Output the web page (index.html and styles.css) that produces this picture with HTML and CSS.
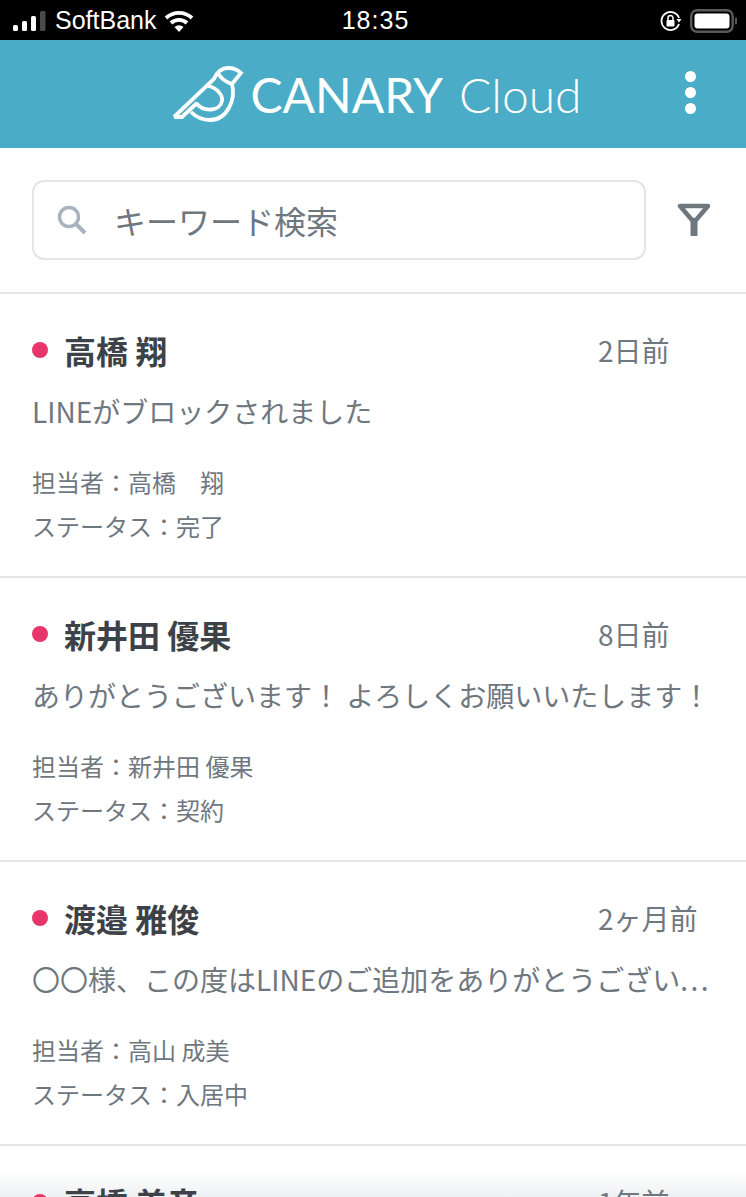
FILE: index.html
```html
<!DOCTYPE html>
<html lang="ja">

<head>
    <meta charset="UTF-8">
    <meta name="viewport" content="width=device-width, initial-scale=1.0">
    <title>CANARY Cloud</title>
    <link rel="stylesheet" href="styles.css">
</head>
<body>
    <div class="statusBar">
        <div class="statusLeft">
            <svg class="signal" width="34" height="20" viewBox="0 0 34 20">
                <rect x="0" y="14" width="5" height="6" rx="1.5" fill="#fff"/>
                <rect x="9" y="10" width="5" height="10" rx="1.5" fill="#fff"/>
                <rect x="18" y="5" width="5" height="15" rx="1.5" fill="#fff"/>
                <rect x="27" y="0" width="5.5" height="20" rx="1.5" fill="#4a4a4a"/>
            </svg>
            <span>SoftBank</span>
            <svg class="wifi" width="30" height="22" viewBox="0 0 30 22">
                <path d="M2 8 A19 19 0 0 1 28 8" fill="none" stroke="#fff" stroke-width="3.8"/>
                <path d="M7 13 A12 12 0 0 1 23 13" fill="none" stroke="#fff" stroke-width="3.8"/>
                <path d="M15 22 L10.5 17 A7 7 0 0 1 19.500 17 Z" fill="#fff"/>
            </svg>
        </div>
        <div class="statusTime">18:35</div>
        <div class="statusRight">
            <svg width="22" height="22" viewBox="0 0 22 22">
                <path d="M19 8 A9 9 0 1 0 19 14" fill="none" stroke="#fff" stroke-width="1.800"/>
                <path d="M16.500 9 L21.500 9 L19 12.500 Z" fill="#fff"/>
                <rect x="6.500" y="10" width="8" height="6.500" rx="1" fill="#fff"/>
                <path d="M8 10 V8 A2.500 2.500 0 0 1 13 8 V10" fill="none" stroke="#fff" stroke-width="1.500"/>
            </svg>
            <svg width="48" height="24" viewBox="0 0 48 24">
                <rect x="1.200" y="1.200" width="41.500" height="21.600" rx="6" fill="none" stroke="#5a5a5a" stroke-width="2.400"/>
                <rect x="4.500" y="4.500" width="35" height="15" rx="3" fill="#fff"/>
                <rect x="45" y="8.500" width="2" height="7" rx="1" fill="#5a5a5a"/>
            </svg>
        </div>
    </div>

    <header class="topBar">
        <div class="logo">
            <svg class="logoBird" width="72" height="56" viewBox="0 0 72 56">
                <path d="M2 51 L42 13 C45 6 50 2 56 2 C62 2 66 4 69 7 L60 18 C64 34 55 54 38 54 C30 54 24 51 19 46" fill="none" stroke="#fff" stroke-width="3.800"/>
                <path d="M2 51 H10 L25 37" fill="none" stroke="#fff" stroke-width="3.800"/>
                <path d="M36 20 C46 22 51 30 50 35 C48 45 32 47 24 37" fill="none" stroke="#fff" stroke-width="3.800"/>
                <path d="M46 7 C49 13 54 16 60 18" fill="none" stroke="#fff" stroke-width="3.800"/>
            </svg>
            <span class="logoName">CANARY</span>
            <span class="logoCloud">Cloud</span>
        </div>
        <div class="menuDots">
            <span></span>
            <span></span>
            <span></span>
        </div>
    </header>

    <section class="searchRow">
        <div class="searchBox">
            <svg width="32" height="32" viewBox="0 0 32 32">
                <circle cx="13" cy="13" r="9.500" fill="none" stroke="#a9b3bf" stroke-width="3.400"/>
                <path d="M20 20 L29 29" stroke="#a9b3bf" stroke-width="4"/>
            </svg>
            <span>キーワード検索</span>
        </div>
        <svg class="filter" width="34" height="34" viewBox="0 0 34 34">
            <path d="M3 3 H31 L19 17 H15 Z" fill="none" stroke="#6e767e" stroke-width="4.500" stroke-linejoin="round"/>
            <path d="M13.500 17 H20.500 V32 Q20.500 33 19.500 33 H14.500 Q13.500 33 13.500 32 Z" fill="#6e767e"/>
        </svg>
    </section>

    <main>
        <article class="item">
            <div class="itemHead">
                <i class="dot"></i>
                <h2>高橋 翔</h2>
                <time>2日前</time>
            </div>
            <p class="message">LINEがブロックされました</p>
            <p class="meta">担当者：高橋　翔</p>
            <p class="meta">ステータス：完了</p>
        </article>
        <article class="item">
            <div class="itemHead">
                <i class="dot"></i>
                <h2>新井田 優果</h2>
                <time>8日前</time>
            </div>
            <p class="message">ありがとうございます！ よろしくお願いいたします！</p>
            <p class="meta">担当者：新井田 優果</p>
            <p class="meta">ステータス：契約</p>
        </article>
        <article class="item">
            <div class="itemHead">
                <i class="dot"></i>
                <h2>渡邉 雅俊</h2>
                <time>2ヶ月前</time>
            </div>
            <p class="message">〇〇様、この度はLINEのご追加をありがとうござい<span class="dots">...</span></p>
            <p class="meta">担当者：高山 成美</p>
            <p class="meta">ステータス：入居中</p>
        </article>
        <article class="item">
            <div class="itemHead">
                <i class="dot"></i>
                <h2>高橋 美音</h2>
                <time>1年前</time>
            </div>
        </article>
    </main>
    <div class="bottomFade"></div>
</body>

</html>
```

FILE: styles.css
```css
* {
    margin: 0;
    padding: 0;
    box-sizing: border-box;
}

html, body {
    height: 1197px;
    overflow: hidden;
}

body {
    background-color: #fff;
    font-family: "Noto Sans CJK JP", "Noto Sans", sans-serif;
    color: #6f777f;
    position: relative;
}

.statusBar {
    background-color: #000;
    color: #fff;
    height: 40px;
    display: grid;
    grid-template-columns: 1fr auto 1fr;
    align-items: center;
    padding: 1px 8px 0 13px;
    font-family: "Liberation Sans", sans-serif;
}

.statusLeft {
    display: flex;
    align-items: center;
    gap: 8px;
    font-size: 25px;
}

.statusTime {
    font-size: 25px;
    letter-spacing: 1px;
}

.statusRight {
    display: flex;
    align-items: center;
    justify-content: flex-end;
    gap: 8px;
}

.topBar {
    background-color: #4aacc6;
    height: 108px;
    color: #fff;
    display: flex;
    align-items: center;
    justify-content: center;
    position: relative;
}

.logo {
    display: flex;
    align-items: center;
    font-family: Lato, sans-serif;
    font-size: 48px;
    font-weight: 300;
    margin-left: 8px;
}

.logoBird {
    margin-right: 6px;
}

.logoName {
    font-weight: 400;
}

.logoCloud {
    margin-left: 16px;
}

.menuDots {
    position: absolute;
    right: 50px;
    top: 31px;
    display: flex;
    flex-direction: column;
    gap: 5px;
}

.menuDots span {
    width: 11px;
    height: 11px;
    border-radius: 50%;
    background-color: #fff;
}

.searchRow {
    height: 146px;
    border-bottom: 2px solid #e0e5ea;
    display: flex;
    align-items: center;
    padding: 0 35px 0 32px;
    justify-content: space-between;
}

.searchBox {
    width: 614px;
    height: 80px;
    border: 2px solid #e0e5ea;
    border-radius: 12px;
    display: flex;
    align-items: center;
    padding-left: 22px;
    gap: 26px;
    font-size: 32px;
}

main {
    position: relative;
    z-index: 1;
}

.item {
    height: 284px;
    border-bottom: 2px solid #e0e5ea;
    padding: 35px 32px 0;
}

.itemHead {
    display: flex;
    align-items: center;
    height: 46px;
}

.dot {
    width: 16px;
    height: 16px;
    border-radius: 50%;
    background-color: #e8356a;
    margin-right: 16px;
    margin-top: -5px;
}

h2 {
    font-size: 32px;
    font-weight: 700;
    color: #3d4248;
    margin-top: -4px;
}

.itemHead time {
    margin-left: auto;
    width: 116px;
    flex: none;
    margin-top: -4px;
    font-size: 28px;
}

.message {
    font-size: 28px;
    line-height: 40px;
    margin-top: 16px;
    white-space: nowrap;
}

.dots {
    letter-spacing: 2.5px;
}

.meta {
    font-size: 24px;
    line-height: 44px;
}

.message + .meta {
    margin-top: 29px;
}

.bottomFade {
    position: absolute;
    left: 0;
    right: 0;
    bottom: 0;
    height: 26px;
    background: linear-gradient(rgba(232, 234, 236, 0), rgba(232, 234, 236, 0.7));
}
```
